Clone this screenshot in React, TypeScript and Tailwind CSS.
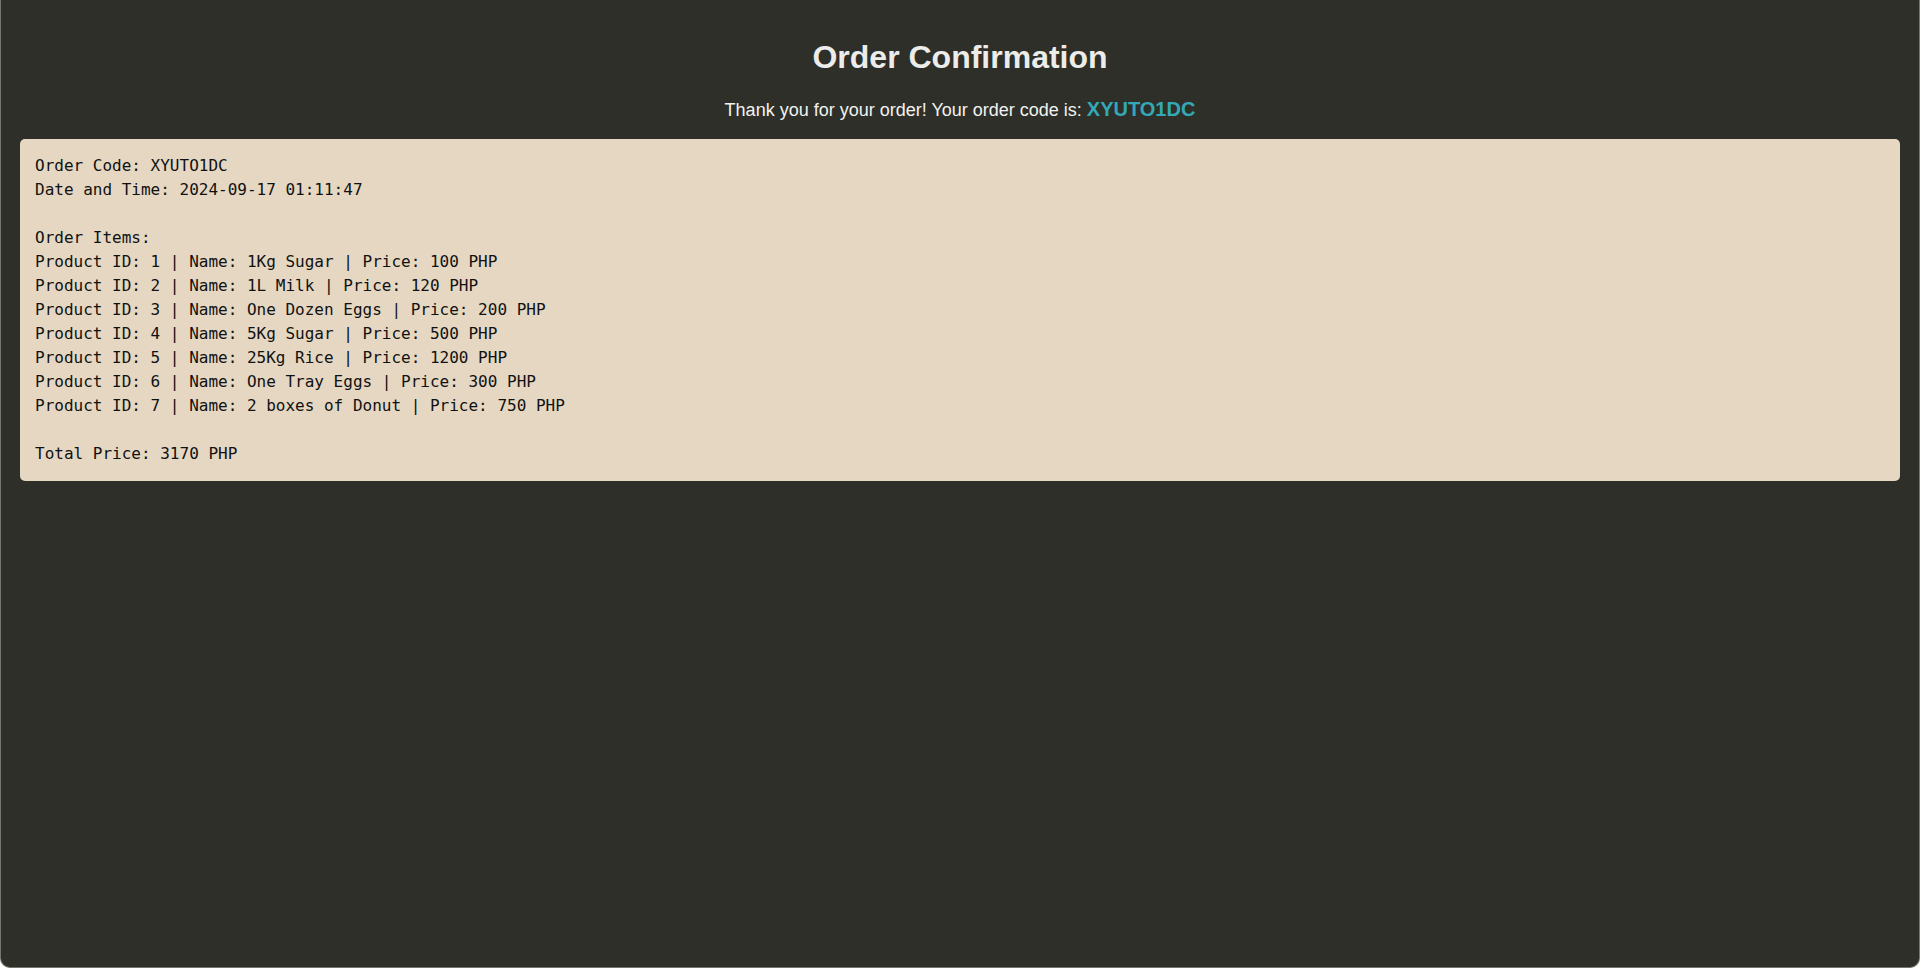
export default function App() {
  const orderCode = "XYUTO1DC";
  const items = [
    { id: 1, name: "1Kg Sugar", price: 100 },
    { id: 2, name: "1L Milk", price: 120 },
    { id: 3, name: "One Dozen Eggs", price: 200 },
    { id: 4, name: "5Kg Sugar", price: 500 },
    { id: 5, name: "25Kg Rice", price: 1200 },
    { id: 6, name: "One Tray Eggs", price: 300 },
    { id: 7, name: "2 boxes of Donut", price: 750 },
  ];
  const total = items.reduce((s, i) => s + i.price, 0);

  const details = [
    `Order Code: ${orderCode}`,
    "Date and Time: 2024-09-17 01:11:47",
    "",
    "Order Items:",
    ...items.map((i) => `Product ID: ${i.id} | Name: ${i.name} | Price: ${i.price} PHP`),
    "",
    `Total Price: ${total} PHP`,
  ].join("\n");

  return (
    <div className="h-screen overflow-hidden bg-[#2e2f29] border-x border-b border-[#76766f] rounded-b-[10px] font-['Liberation_Sans',Arial,sans-serif]">
      <div className="px-[19px] pt-[39px]">
        <h1 className="text-center text-[32px] leading-[37px] font-bold text-[#ececea]">
          Order Confirmation
        </h1>
        <p className="mt-[22px] mb-[17px] text-center text-[18px] leading-[23px] text-[#f2f2f0]">
          Thank you for your order! Your order code is:{" "}
          <span className="text-[20px] font-bold text-[#33a9b7]">{orderCode}</span>
        </p>
        <pre className="bg-[#e5d7c1] rounded-[5px] p-[15px] text-[16px] leading-[24px] text-[#111] whitespace-pre-wrap font-['DejaVu_Sans_Mono',Menlo,monospace]">
          {details}
        </pre>
      </div>
    </div>
  );
}
